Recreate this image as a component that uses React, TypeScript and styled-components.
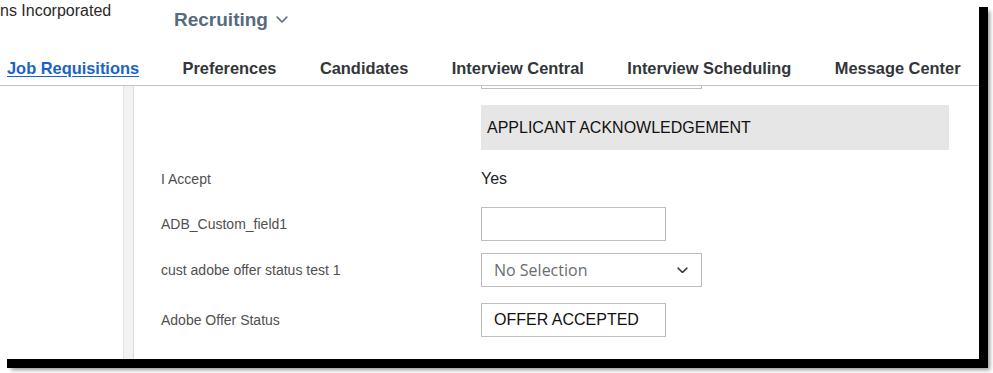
import React from "react";
import styled, { createGlobalStyle } from "styled-components";

const GlobalStyle = createGlobalStyle`
  html, body {
    margin: 0;
    padding: 0;
    background: #ffffff;
  }
  body {
    font-family: "Liberation Sans", Arial, sans-serif;
  }
`;

interface Field {
  label: string;
  kind: "text" | "input" | "select";
  value?: string;
  width?: number;
  gapBefore?: number;
}

const fields: Field[] = [
  { label: "I Accept", kind: "text", value: "Yes" },
  { label: "ADB_Custom_field1", kind: "input", value: "", width: 185, gapBefore: 11 },
  { label: "cust adobe offer status test 1", kind: "select", value: "No Selection", width: 221 },
  { label: "Adobe Offer Status", kind: "input", value: "OFFER ACCEPTED", width: 185, gapBefore: 16 },
];

const tabs = [
  "Job Requisitions",
  "Preferences",
  "Candidates",
  "Interview Central",
  "Interview Scheduling",
  "Message Center",
];

const Chevron = ({ color, size }: { color: string; size: number }) => (
  <svg width={size} height={size * 0.6} viewBox="0 0 10 6" fill="none">
    <path d="M1 1l4 4 4-4" stroke={color} strokeWidth="1.4" strokeLinecap="round" strokeLinejoin="round" />
  </svg>
);

const App = () => {
  return (
    <>
      <GlobalStyle />
      <Page>
        <Frame>
          <TopBar>
            <Company>ns Incorporated</Company>
            <Module>
              Recruiting
              <Chevron color="#5b6f85" size={12} />
            </Module>
          </TopBar>
          <Nav>
            {tabs.map((t, i) => (
              <Tab key={t} $active={i === 0}>
                {t}
              </Tab>
            ))}
          </Nav>
          <Body>
            <Side />
            <Gutter />
            <Content>
              <FormGrid>
                <span />
                <CutField />
                <span />
                <SectionHeader>APPLICANT ACKNOWLEDGEMENT</SectionHeader>
                {fields.map((f) => (
                  <React.Fragment key={f.label}>
                    <Label $gap={f.gapBefore}>{f.label}</Label>
                    <Value $gap={f.gapBefore}>
                      {f.kind === "text" && <PlainValue>{f.value}</PlainValue>}
                      {f.kind === "input" && <InputBox $w={f.width || 185}>{f.value}</InputBox>}
                      {f.kind === "select" && (
                        <SelectBox $w={f.width || 221}>
                          <span>{f.value}</span>
                          <Chevron color="#3a3a3a" size={11} />
                        </SelectBox>
                      )}
                    </Value>
                  </React.Fragment>
                ))}
              </FormGrid>
            </Content>
          </Body>
        </Frame>
      </Page>
    </>
  );
};

const Page = styled.div`
  width: 993px;
  height: 373px;
  overflow: hidden;
  background: #ffffff;
`;

const Frame = styled.div`
  width: 979px;
  height: 359px;
  background: #ffffff;
  overflow: hidden;
  display: flex;
  flex-direction: column;
  box-shadow: 8px 8px 0 1px #000000, 11px 11px 4px rgba(0, 0, 0, 0.4);
`;

const TopBar = styled.div`
  height: 50px;
  display: flex;
  align-items: flex-start;
`;

const Company = styled.div`
  width: 174px;
  padding-top: 2px;
  font-size: 16px;
  color: #2a2a2a;
  white-space: nowrap;
`;

const Module = styled.div`
  display: flex;
  align-items: center;
  gap: 8px;
  padding-top: 9px;
  font-size: 19px;
  font-weight: 700;
  color: #556b82;
`;

const Nav = styled.div`
  height: 36px;
  display: flex;
  align-items: center;
  gap: 43.5px;
  padding-left: 7px;
  padding-top: 1px;
  border-bottom: 1.5px solid #c4c4c4;
  box-sizing: border-box;
`;

const Tab = styled.a<{ $active: boolean }>`
  font-size: 16.4px;
  font-weight: 700;
  white-space: nowrap;
  color: ${(p) => (p.$active ? "#1a63c9" : "#32363a")};
  text-decoration: ${(p) => (p.$active ? "underline" : "none")};
  text-underline-offset: 2px;
`;

const Body = styled.div`
  flex: 1;
  display: flex;
  min-height: 0;
`;

const Side = styled.div`
  width: 123px;
`;

const Gutter = styled.div`
  width: 11px;
  box-sizing: border-box;
  background: #f2f2f2;
  border-left: 1px solid #e2e2e2;
  border-right: 1px solid #dcdcdc;
`;

const Content = styled.div`
  flex: 1;
  padding-left: 27px;
`;

const FormGrid = styled.div`
  display: grid;
  grid-template-columns: 320px 1fr;
  align-items: center;
`;

const CutField = styled.div`
  width: 221px;
  height: 3px;
  box-sizing: border-box;
  border: 1px solid #bdbdbd;
  border-top: none;
`;

const SectionHeader = styled.div`
  margin-top: 16px;
  width: 468px;
  height: 45px;
  box-sizing: border-box;
  background: #e6e6e6;
  display: flex;
  align-items: center;
  padding-left: 6px;
  font-size: 16px;
  color: #111111;
`;

const Label = styled.div<{ $gap?: number }>`
  margin-top: ${(p) => p.$gap ?? 12}px;
  height: 34px;
  display: flex;
  align-items: center;
  font-size: 14px;
  color: #505050;
`;

const Value = styled.div<{ $gap?: number }>`
  margin-top: ${(p) => p.$gap ?? 12}px;
  height: 34px;
  display: flex;
  align-items: center;
`;

const PlainValue = styled.span`
  font-size: 16px;
  color: #222222;
`;

const InputBox = styled.div<{ $w: number }>`
  width: ${(p) => p.$w}px;
  height: 34px;
  box-sizing: border-box;
  border: 1px solid #bdbdbd;
  display: flex;
  align-items: center;
  padding-left: 12px;
  font-size: 16px;
  color: #111111;
`;

const SelectBox = styled.div<{ $w: number }>`
  width: ${(p) => p.$w}px;
  height: 34px;
  box-sizing: border-box;
  border: 1px solid #bdbdbd;
  display: flex;
  align-items: center;
  justify-content: space-between;
  padding: 0 13px 0 12px;
  font-family: "Open Sans", "Liberation Sans", sans-serif;
  font-size: 16px;
  color: #6a6d70;
`;

export default App;
